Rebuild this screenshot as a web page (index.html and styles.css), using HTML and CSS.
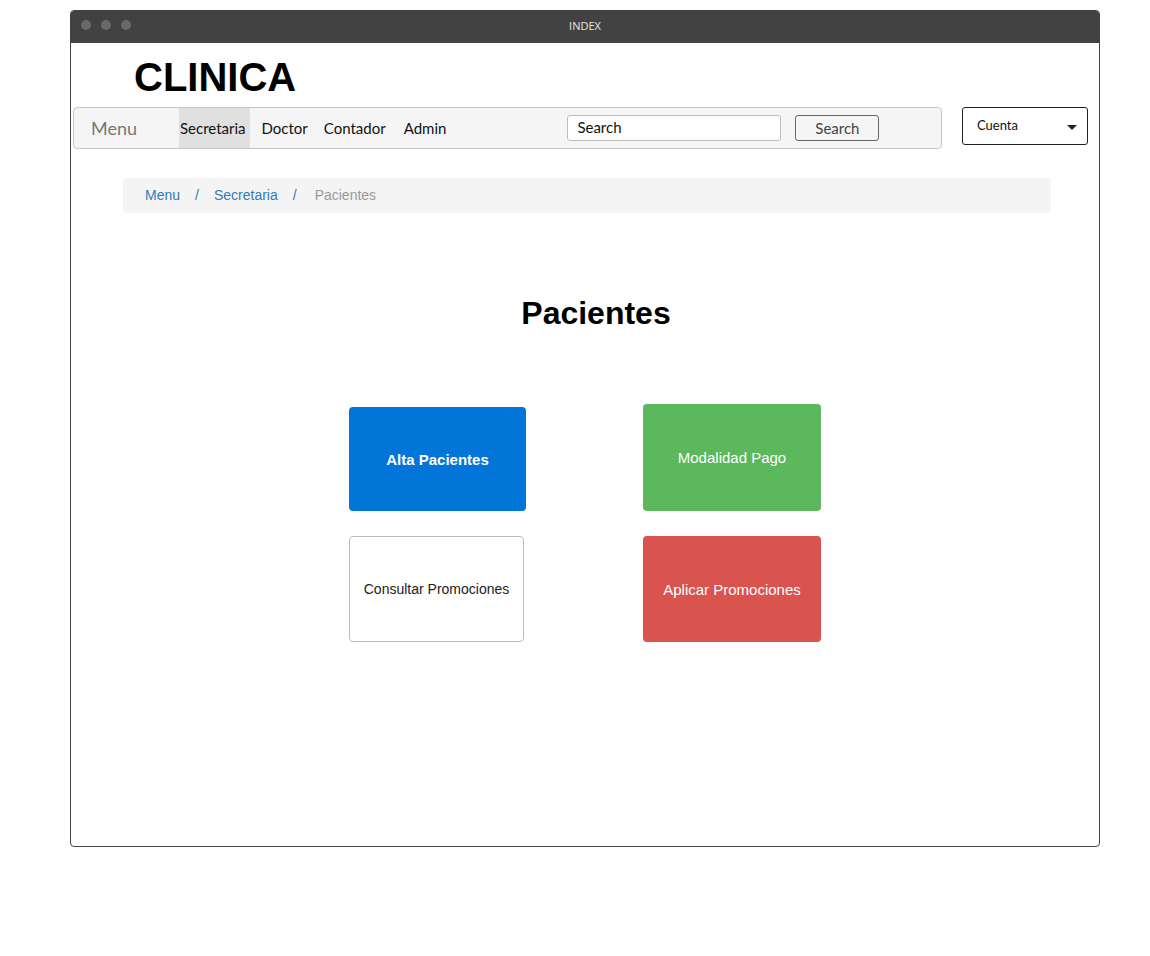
FILE: index.html
```html
<!DOCTYPE html>
<html lang="es">
<head>
<meta charset="utf-8">
<title>INDEX</title>
<link rel="stylesheet" href="styles.css">
</head>
<body>
<div class="window">
  <div class="titlebar">
    <div class="dots"><span class="dot"></span><span class="dot"></span><span class="dot"></span></div>
    <div class="wtitle">INDEX</div>
  </div>
  <div class="content">
    <h1 class="brand">CLINICA</h1>
    <div class="navrow">
      <nav class="navbar">
        <span class="nav-brand">Menu</span>
        <ul class="nav-links">
          <li class="nav-item active">Secretaria</li>
          <li class="nav-item">Doctor</li>
          <li class="nav-item">Contador</li>
          <li class="nav-item">Admin</li>
        </ul>
        <div class="search">
          <div class="search-input">Search</div>
          <div class="search-btn">Search</div>
        </div>
      </nav>
      <div class="account">
        <span>Cuenta</span>
        <span class="caret"></span>
      </div>
    </div>
    <div class="breadcrumb">
      <a class="crumb">Menu</a>
      <span class="sep">/</span>
      <a class="crumb">Secretaria</a>
      <span class="sep">/</span>
      <span class="crumb current">Pacientes</span>
    </div>
    <h2 class="title">Pacientes</h2>
    <div class="tiles">
      <div class="tile tile-blue">Alta Pacientes</div>
      <div class="tile tile-green">Modalidad Pago</div>
      <div class="tile tile-white">Consultar Promociones</div>
      <div class="tile tile-red">Aplicar Promociones</div>
    </div>
  </div>
</div>
</body>
</html>
```
FILE: styles.css
```css
* { box-sizing: border-box; }
html, body { margin: 0; padding: 0; background: #fff; }
body { padding: 10px 0 0 70px; font-family: "Liberation Sans", Arial, sans-serif; }

.window {
  width: 1030px;
  height: 837px;
  border: 1px solid #444;
  border-radius: 4px;
  display: flex;
  flex-direction: column;
  overflow: hidden;
}
.titlebar {
  height: 32px;
  background: #424242;
  position: relative;
  display: flex;
  align-items: center;
  justify-content: center;
  flex-shrink: 0;
  padding-bottom: 3px;
}
.dots { position: absolute; left: 10px; top: 9px; display: flex; gap: 10px; }
.dot { width: 10px; height: 10px; border-radius: 50%; background: #6a6a6a; }
.wtitle { font-family: "Open Sans", sans-serif; font-size: 11px; color: #e8e8e8; }

.content { flex: 1; display: flex; flex-direction: column; }
.brand {
  margin: 12px 0 0 63px;
  font-size: 40px;
  line-height: 44px;
  font-weight: bold;
  color: #000;
}
.navrow { display: flex; align-items: flex-start; margin: 8px 0 0 2px; }
.navbar {
  width: 869px;
  height: 42px;
  background: #f5f5f5;
  border: 1px solid #c8c8c8;
  border-radius: 4px;
  display: flex;
  align-items: stretch;
  font-family: Lato, sans-serif;
}
.nav-brand { font-size: 18px; color: #777; padding: 0 0 0 17px; width: 105px; display: flex; align-items: center; }
.nav-links { list-style: none; margin: 0; padding: 0; display: flex; }
.nav-item { display: flex; align-items: center; font-size: 15px; color: #111; padding: 0 8px; margin-right: 0; }
.nav-item.active { background: #e0e0e0; padding: 0 4px 0 1px; margin-right: 11px; }
.nav-item:nth-child(2) { padding: 0 16px 0 1px; }
.nav-item:nth-child(3) { padding: 0 18px 0 0; }
.nav-item:nth-child(4) { padding: 0; }
.search { display: flex; align-items: center; margin-left: 121px; gap: 14px; padding-bottom: 1px; }
.search-input {
  width: 214px; height: 26px; border: 1px solid #bdbdbd; border-radius: 3px; background: #fff;
  font-size: 15px; color: #111; padding: 0 9px 1px; display: flex; align-items: center;
}
.search-btn {
  width: 84px; height: 26px; border: 1px solid #666; border-radius: 3px; background: #f5f5f5;
  font-size: 15px; color: #444; display: flex; align-items: center; justify-content: center; padding-top: 1px;
}
.account {
  margin-left: 20px;
  width: 126px; height: 38px;
  border: 1px solid #222; border-radius: 3px;
  display: flex; align-items: center; justify-content: space-between;
  padding: 0 10px 2px 14px;
  font-family: Lato, sans-serif; font-size: 13px; color: #111;
}
.caret {
  width: 0; height: 0;
  border-left: 5px solid transparent; border-right: 5px solid transparent; border-top: 5px solid #222;
  margin-top: 4px;
}
.breadcrumb {
  margin: 29px 0 0 52px;
  width: 928px; height: 35px;
  background: #f4f4f4; border-radius: 4px;
  display: flex; align-items: center;
  padding: 0 0 2px 22px;
  font-size: 14px;
}
.crumb { color: #337ab7; }
.crumb.current { color: #999; margin-left: 3px; }
.sep { color: #337ab7; padding: 0 15px; }
.title {
  margin: 80px 0 0 0;
  text-align: center;
  font-size: 32px; line-height: 40px; font-weight: bold; color: #000;
  padding-left: 22px;
}
.tiles {
  margin: 71px 0 0 278px;
  display: grid;
  grid-template-columns: 177px 178px;
  column-gap: 117px;
  row-gap: 25px;
  align-items: end;
}
.tile {
  display: flex; align-items: center; justify-content: center;
  font-size: 15px; border-radius: 4px; text-align: center;
}
.tile-blue { height: 104px; background: #0275d8; color: #fff; font-weight: bold; }
.tile-green { height: 107px; background: #5cb85c; color: #fff; }
.tile-white { height: 106px; width: 175px; background: #fff; border: 1px solid #bbb; color: #222; font-size: 14px; }
.tile-red { height: 106px; background: #d9534f; color: #fff; }
```
